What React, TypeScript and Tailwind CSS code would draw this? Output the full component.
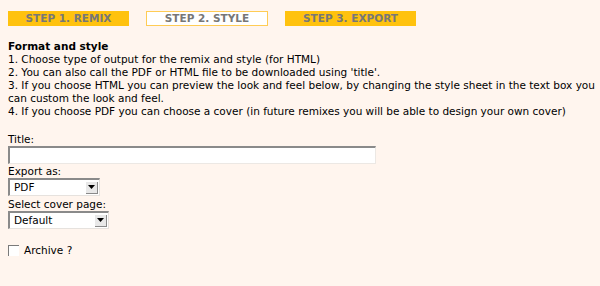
import React from "react";

function Tab({ label, active, w }: { label: string; active?: boolean; w: string }) {
  return (
    <div
      className={`${w} h-[15px] flex items-center justify-center text-[10.5px] font-bold leading-none text-[#777777] ${
        active ? "bg-white border border-[#ffcc55]" : "bg-[#ffc20e]"
      }`}
    >
      {label}
    </div>
  );
}

function FakeSelect({ value, w }: { value: string; w: string }) {
  return (
    <div className={`${w} h-[18px] flex items-center bg-white border-t-2 border-l-2 border-t-[#8a8a8a] border-l-[#8a8a8a] border-r border-b border-r-[#e6e2de] border-b-[#e6e2de]`}>
      <span className="flex-1 pl-[4px] text-[10.5px] leading-none">{value}</span>
      <div className="w-[12px] h-[12px] mr-[1px] bg-[#e8e8e8] border-r border-b border-[#8a8a8a] flex items-center justify-center">
        <svg width="7" height="4" viewBox="0 0 7 4">
          <polygon points="0,0 7,0 3.5,4" fill="#000" />
        </svg>
      </div>
    </div>
  );
}

export default function App() {
  return (
    <div
      className="min-h-[286px] bg-[#fff5ee] pl-[8px] text-black"
      style={{ fontFamily: '"DejaVu Sans", sans-serif' }}
    >
      <div className="pt-[11px] flex gap-[17px]">
        <Tab label="STEP 1. REMIX" w="w-[121px]" />
        <Tab label="STEP 2. STYLE" w="w-[122px]" active />
        <Tab label="STEP 3. EXPORT" w="w-[131px]" />
      </div>
      <div className="mt-[14px] text-[10.5px] leading-[13px]">
        <div className="font-bold">Format and style</div>
        <div>1. Choose type of output for the remix and style (for HTML)</div>
        <div>2. You can also call the PDF or HTML file to be downloaded using 'title'.</div>
        <div>
          3. If you choose HTML you can preview the look and feel below, by changing the style sheet in the text box you can custom the look and feel.
        </div>
        <div>4. If you choose PDF you can choose a cover (in future remixes you will be able to design your own cover)</div>
      </div>
      <div className="mt-[15px] text-[10.5px] leading-[13px]">
        <div>Title:</div>
        <div className="w-[368px] h-[18px] bg-white border-t-2 border-l-2 border-t-[#8a8a8a] border-l-[#8a8a8a] border-r border-b border-r-[#ece8e4] border-b-[#ece8e4]" />
        <div className="mt-[1px]">Export as:</div>
        <FakeSelect value="PDF" w="w-[92px]" />
        <div className="mt-[2px]">Select cover page:</div>
        <FakeSelect value="Default" w="w-[101px]" />
        <div className="mt-[15px] flex items-center gap-[5px]">
          <div className="w-[11px] h-[11px] bg-white border-t border-l border-[#7a7a7a]" />
          <span>Archive ?</span>
        </div>
      </div>
    </div>
  );
}
